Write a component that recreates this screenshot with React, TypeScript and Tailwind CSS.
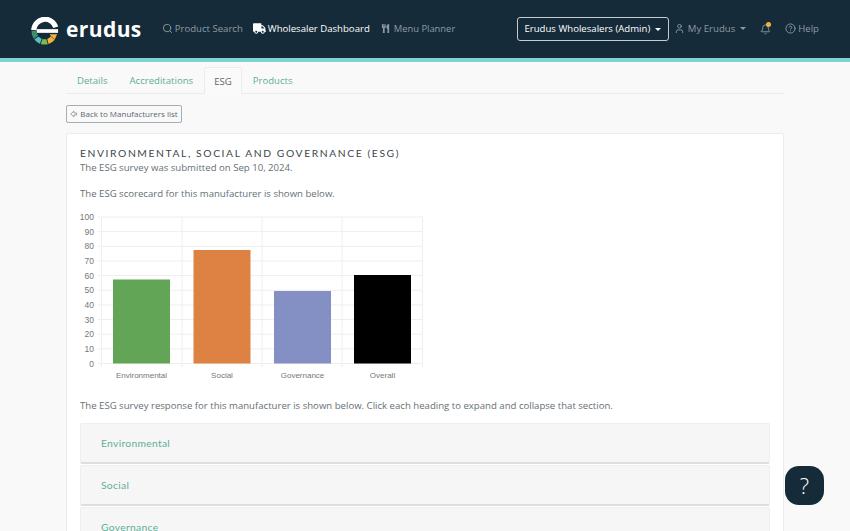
import { Search, User, Bell, CircleHelp, ArrowBigLeft } from "lucide-react";
import { FaTruck, FaUtensils } from "react-icons/fa";

const openSans = { fontFamily: '"Open Sans", sans-serif' };

function Logo() {
  return (
    <div className="flex items-center gap-[7px]">
      <svg width="28" height="28" viewBox="0 0 30 30" className="ml-[1px] mt-[3px]">
        <path d="M3 14 A12 12 0 0 1 26.5 11" fill="none" stroke="#ffffff" strokeWidth="5.5" />
        <path d="M6 15 H29" fill="none" stroke="#ffffff" strokeWidth="4" />
        <path d="M0.5 15 H6 A9 9 0 0 0 7.5 20 L3 23.5 A15 15 0 0 1 0.5 15 Z" fill="#3f8f6b" />
        <path d="M3.6 24.2 L8 20.8 A9 9 0 0 0 11.5 23.3 L9.5 28.6 A15 15 0 0 1 3.6 24.2 Z" fill="#58bfc4" />
        <path d="M10.4 28.9 L12.4 23.6 A9 9 0 0 0 16.5 23.8 L18 29.2 A15 15 0 0 1 10.4 28.9 Z" fill="#7dbb42" />
        <path d="M18.8 29 L17.4 23.6 A9 9 0 0 0 21 21 L25.5 24.5 A15 15 0 0 1 18.8 29 Z" fill="#f4b13e" />
        <path d="M20 18.5 H28 L25.5 24 L21.5 20.5 Z" fill="#f4b13e" />
      </svg>
      <span className="text-[21px] font-bold tracking-[0.4px] text-white leading-none">erudus</span>
    </div>
  );
}

function Header() {
  return (
    <header className="flex h-[62px] shrink-0 items-center whitespace-nowrap border-b-4 border-[#7dd4d2] bg-[#152b3a] pl-[30px] pr-[31px] text-[9.6px] text-[#8d9aa3]">
      <Logo />
      <nav className="ml-[20px] flex items-center">
        <a className="flex items-center gap-[2px]">
          <Search size={11} strokeWidth={2} />
          Product Search
        </a>
        <a className="ml-[10px] flex items-center gap-[2px] font-medium text-white">
          <FaTruck size={13} />
          Wholesaler Dashboard
        </a>
        <a className="ml-[11px] flex items-center gap-[4px] text-[9.4px]">
          <FaUtensils size={9} />
          Menu Planner
        </a>
      </nav>
      <div className="ml-auto flex items-center">
        <button className="flex h-[24px] w-[152px] items-center justify-center gap-[5px] rounded-[3px] border border-[#c5ccd1] font-medium text-white">
          Erudus Wholesalers (Admin)
          <span className="border-x-[3px] border-t-[3px] border-x-transparent border-t-white" />
        </button>
        <a className="ml-[5px] flex items-center gap-[3px]">
          <User size={11} />
          My Erudus
          <span className="ml-[2px] border-x-[3px] border-t-[3px] border-x-transparent border-t-[#8d9aa3]" />
        </a>
        <span className="relative ml-[14px] flex">
          <Bell size={11} />
          <span className="absolute -top-[2px] left-[6px] h-[5px] w-[5px] rounded-full bg-[#f4b13e]" />
        </span>
        <a className="ml-[14px] flex items-center gap-[2px]">
          <CircleHelp size={11} />
          Help
        </a>
      </div>
    </header>
  );
}

function Tabs() {
  return (
    <div className="flex h-[32px] shrink-0 items-end border-b border-[#ececec] pl-[1px] text-[9.6px] text-[#5fae97]">
      <a className="flex h-[26px] items-center px-[10px] pt-[3px]">Details</a>
      <a className="ml-[2px] flex h-[26px] items-center px-[10px] pt-[3px]">Accreditations</a>
      <a className="-mb-px ml-[1px] flex h-[27px] items-center rounded-t-[2px] border-x border-t border-[#ececec] bg-[#fafafa] px-[9px] pt-[3px] text-[#5c6770]">ESG</a>
      <a className="ml-[1px] flex h-[26px] items-center px-[10px] pt-[3px]">Products</a>
    </div>
  );
}

const ticks = [0, 10, 20, 30, 40, 50, 60, 70, 80, 90, 100];
const bars = [
  { name: "Environmental", x: 12, y: 62.5, h: 84, fill: "#62a556" },
  { name: "Social", x: 92.5, y: 33, h: 113.5, fill: "#de8244" },
  { name: "Governance", x: 173, y: 74, h: 72.5, fill: "#8490c4" },
  { name: "Overall", x: 253, y: 58, h: 88.5, fill: "#000000" },
];

function Chart() {
  return (
    <svg width="360" height="170" viewBox="-21 -8 360 170" className="mt-[8px] block" style={{ fontFamily: '"Liberation Sans", sans-serif' }}>
      {ticks.map((t) => {
        const y = 146.5 - t * 1.465;
        return (
          <g key={t}>
            <line x1="-3" x2="322" y1={y} y2={y} stroke="#eeeeee" strokeWidth="1" />
            <text x="-7" y={y + 3} textAnchor="end" fontSize="8.5" fill="#777">{t}</text>
          </g>
        );
      })}
      {[0.5, 81, 161, 241, 321.5].map((x) => (
        <line key={x} x1={x} x2={x} y1="0" y2="150" stroke="#eeeeee" strokeWidth="1" />
      ))}
      {bars.map((b) => (
        <g key={b.name}>
          <rect x={b.x} y={b.y} width="57" height={b.h} fill={b.fill} />
          <text x={b.x + 28.5} y="161" textAnchor="middle" fontSize="8" fill="#777">{b.name}</text>
        </g>
      ))}
    </svg>
  );
}

function AccordionRow({ title }: { title: string }) {
  return (
    <div className="flex h-[41px] shrink-0 items-center rounded-[2px] border border-[#efefef] border-b-[#dedede] border-b-2 bg-[#f6f6f6] pl-[20px] pt-[1px] text-[10.3px] tracking-[0.3px] text-[#5fae97]" style={{ fontFamily: "Lato, sans-serif" }}>
      {title}
    </div>
  );
}

export default function App() {
  return (
    <div className="relative flex h-[531px] w-[850px] flex-col overflow-hidden bg-[#f9f9f9]" style={openSans}>
      <Header />
      <main className="mx-[66px] flex min-h-0 flex-1 flex-col">
        <Tabs />
        <button className="mt-[11px] flex h-[18px] w-[116px] shrink-0 items-center justify-center gap-[2px] rounded-[2px] border border-[#a9adb0] text-[8px] text-[#5c6770]">
          <ArrowBigLeft size={8} strokeWidth={2} />
          Back to Manufacturers list
        </button>
        <section className="mt-[10px] shrink-0 rounded-t-[2px] border border-[#ececec] bg-white px-[13px] pt-[12px] text-[9.6px] text-[#666f76]">
          <h1 className="text-[10.3px] leading-[15px] tracking-[1.6px] text-[#3c464d] uppercase" style={{ fontFamily: "Lato, sans-serif" }}>
            Environmental, Social and Governance (ESG)
          </h1>
          <p className="leading-[14px]">The ESG survey was submitted on Sep 10, 2024.</p>
          <p className="mt-[12px] leading-[14px]">The ESG scorecard for this manufacturer is shown below.</p>
          <Chart />
          <p className="mt-[20px] leading-[14px]">The ESG survey response for this manufacturer is shown below. Click each heading to expand and collapse that section.</p>
          <div className="mt-[10px] flex flex-col gap-[1px]">
            <AccordionRow title="Environmental" />
            <AccordionRow title="Social" />
            <AccordionRow title="Governance" />
          </div>
        </section>
      </main>
      <button className="absolute left-[785px] top-[466px] flex h-[39px] w-[39px] items-center justify-center rounded-[14px] bg-[#152b3a] text-[22px] font-light text-white">?</button>
    </div>
  );
}
